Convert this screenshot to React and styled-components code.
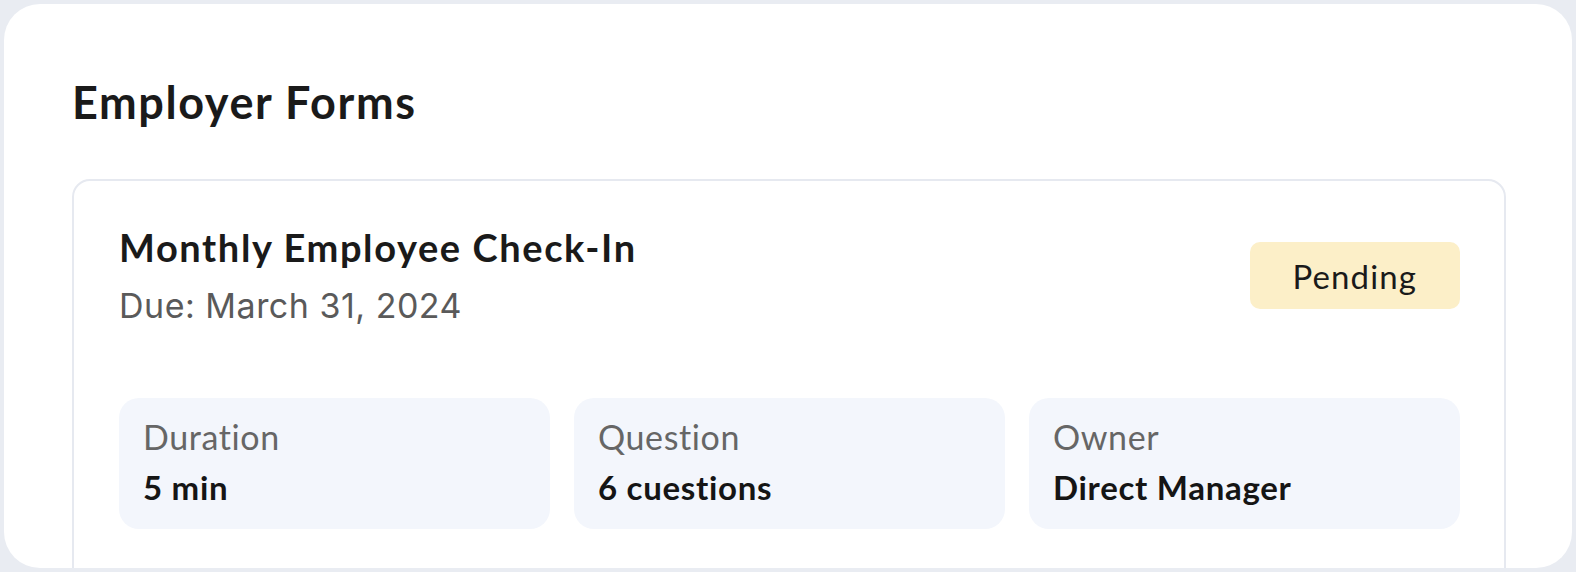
import React from 'react';
import styled, { createGlobalStyle } from 'styled-components';

const GlobalStyle = createGlobalStyle`
  * {
    box-sizing: border-box;
  }
  html, body {
    margin: 0;
    padding: 0;
    background: #e9ecf2;
  }
  body {
    font-family: 'Lato', 'Open Sans', sans-serif;
    color: #1a1a1a;
  }
`;

const Page = styled.div`
  height: 572px;
  padding: 4px;
`;

const Panel = styled.section`
  height: 100%;
  background: #ffffff;
  border-radius: 36px;
  padding: 71px 66px 0 68px;
  overflow: hidden;
`;

const Heading = styled.h1`
  margin: 0;
  font-size: 45px;
  line-height: 1.2;
  font-weight: 700;
  letter-spacing: 1.6px;
  color: #1a1a1a;
`;

const FormCard = styled.div`
  margin-top: 50px;
  border: 2px solid #e6e9f0;
  border-radius: 18px;
  padding: 44px 44px 60px 45px;
`;

const CardHeader = styled.div`
  display: flex;
  align-items: center;
  justify-content: space-between;
`;

const TitleBlock = styled.div`
  display: flex;
  flex-direction: column;
  gap: 15px;
`;

const FormTitle = styled.h2`
  margin: 0;
  font-size: 38px;
  line-height: 1.2;
  font-weight: 700;
  letter-spacing: 1.6px;
  color: #1a1a1a;
`;

const DueDate = styled.div`
  font-family: 'Inter', 'Roboto', sans-serif;
  font-size: 34px;
  line-height: 1.2;
  font-weight: 400;
  letter-spacing: 0.5px;
  color: #5a5a5a;
`;

const StatusBadge = styled.span`
  display: inline-flex;
  align-items: center;
  justify-content: center;
  height: 67px;
  padding: 0 43px;
  border-radius: 10px;
  background: ${p => p.$bg || '#fcefc8'};
  font-size: 33px;
  font-weight: 400;
  letter-spacing: 1.1px;
  color: #1a1a1a;
`;

const StatGrid = styled.div`
  display: grid;
  grid-template-columns: repeat(3, 1fr);
  gap: 24px;
  margin-top: 72px;
`;

const StatBox = styled.div`
  display: flex;
  flex-direction: column;
  gap: 10px;
  height: 131px;
  padding: 19px 24px 0;
  border-radius: 20px;
  background: #f3f6fc;
`;

const StatLabel = styled.div`
  font-size: 34px;
  line-height: 40px;
  font-weight: 400;
  letter-spacing: 0.6px;
  color: #666666;
`;

const StatValue = styled.div`
  font-size: 33px;
  line-height: 40px;
  font-weight: 700;
  letter-spacing: 0.7px;
  color: #151515;
`;

const stats = [
  { label: 'Duration', value: '5 min' },
  { label: 'Question', value: '6 cuestions' },
  { label: 'Owner', value: 'Direct Manager' },
];

export default function App() {
  return (
    <>
      <GlobalStyle />
      <Page>
        <Panel>
          <Heading>Employer Forms</Heading>
          <FormCard>
            <CardHeader>
              <TitleBlock>
                <FormTitle>Monthly Employee Check-In</FormTitle>
                <DueDate>Due: March 31, 2024</DueDate>
              </TitleBlock>
              <StatusBadge>Pending</StatusBadge>
            </CardHeader>
            <StatGrid>
              {stats.map(s => (
                <StatBox key={s.label}>
                  <StatLabel>{s.label}</StatLabel>
                  <StatValue>{s.value}</StatValue>
                </StatBox>
              ))}
            </StatGrid>
          </FormCard>
        </Panel>
      </Page>
    </>
  );
}
